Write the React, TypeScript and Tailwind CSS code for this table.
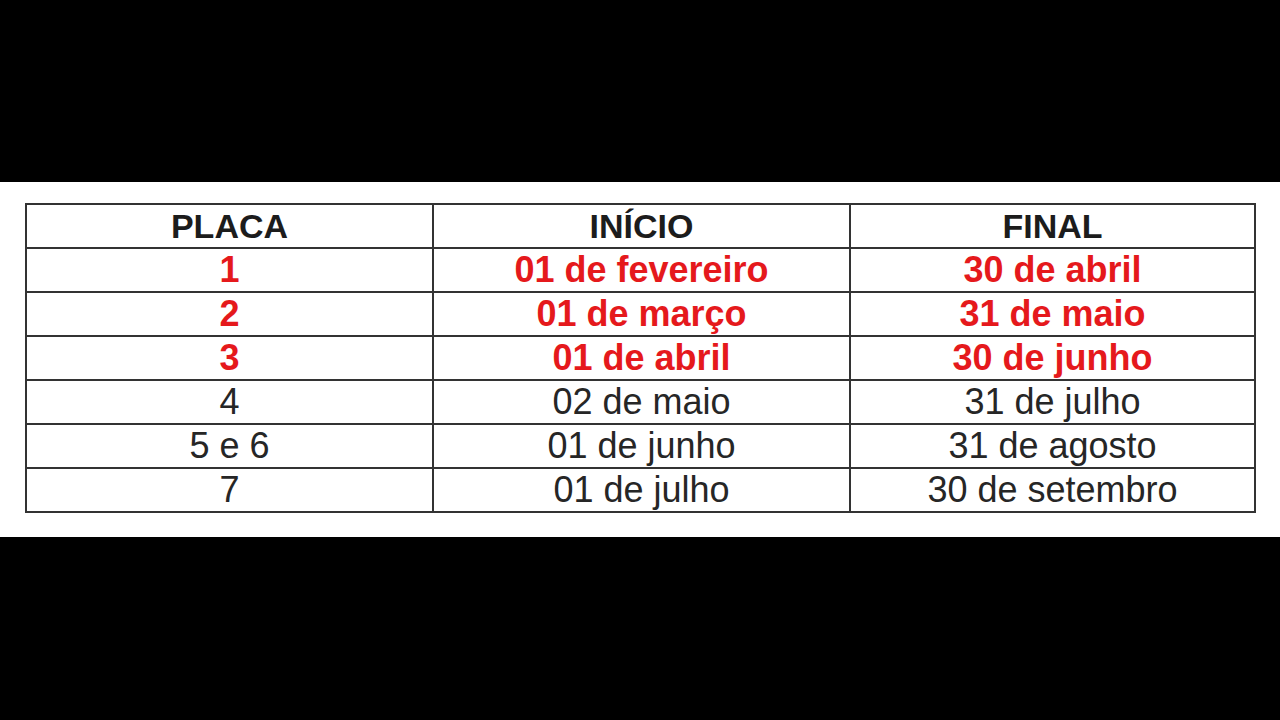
const rows = [
  { placa: '1', inicio: '01 de fevereiro', final: '30 de abril', red: true },
  { placa: '2', inicio: '01 de março', final: '31 de maio', red: true },
  { placa: '3', inicio: '01 de abril', final: '30 de junho', red: true },
  { placa: '4', inicio: '02 de maio', final: '31 de julho', red: false },
  { placa: '5 e 6', inicio: '01 de junho', final: '31 de agosto', red: false },
  { placa: '7', inicio: '01 de julho', final: '30 de setembro', red: false },
];

export default function App() {
  return (
    <div className="w-[1280px] h-[720px] bg-black flex flex-col" style={{ fontFamily: '"Liberation Sans", Arial, sans-serif' }}>
      <div className="h-[182px]" />
      <div className="h-[355px] bg-white pt-[21px] pl-[25px]">
        <table className="table-fixed border-collapse w-[1229px] leading-none">
          <colgroup>
            <col className="w-[407px]" />
            <col className="w-[417px]" />
            <col className="w-[405px]" />
          </colgroup>
          <thead>
            <tr className="h-[44px] font-bold text-[34px] text-[#1c1c1c]">
              <th className="border-2 border-[#333] text-center p-0">PLACA</th>
              <th className="border-2 border-[#333] text-center p-0">INÍCIO</th>
              <th className="border-2 border-[#333] text-center p-0">FINAL</th>
            </tr>
          </thead>
          <tbody>
            {rows.map((r) => (
              <tr key={r.placa} className={r.red ? 'h-[44px] font-bold text-[36px] text-[#e5191c]' : 'h-[44px] text-[36px] text-[#262626]'}>
                <td className="border-2 border-[#333] text-center p-0">{r.placa}</td>
                <td className="border-2 border-[#333] text-center p-0">{r.inicio}</td>
                <td className="border-2 border-[#333] text-center p-0">{r.final}</td>
              </tr>
            ))}
          </tbody>
        </table>
      </div>
      <div className="flex-1" />
    </div>
  );
}
